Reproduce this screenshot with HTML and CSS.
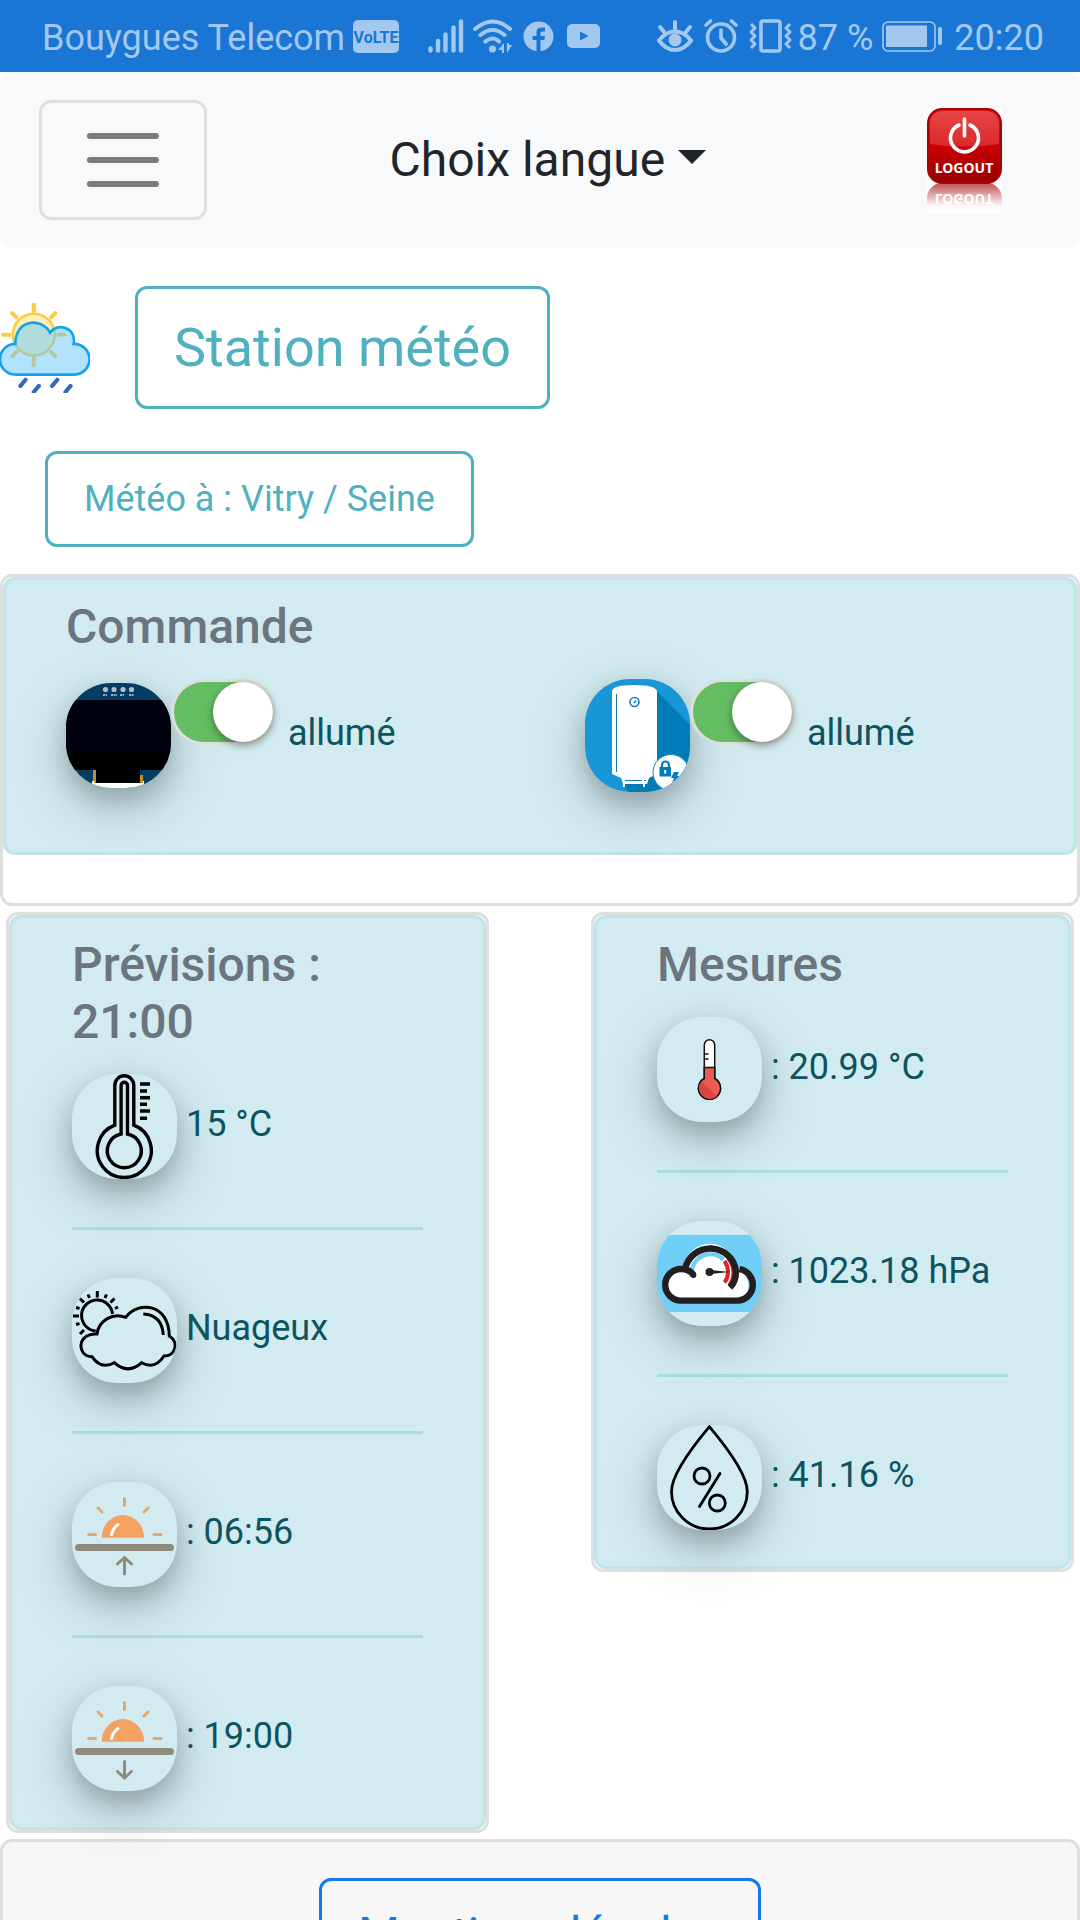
FILE: index.html
```html
<!DOCTYPE html>
<html lang="fr">
<head>
<meta charset="utf-8">
<meta name="viewport" content="width=device-width, initial-scale=1">
<title>Station météo</title>
<link rel="stylesheet" href="styles.css">
</head>
<body>
<div class="status">
  <span class="status-text">Bouygues Telecom</span>
  <svg class="volte" width="46" height="33" viewBox="0 0 46 33"><rect width="46" height="33" rx="5" fill="#a3c8ef"/><text x="23" y="23" text-anchor="middle" class="volte-text">VoLTE</text></svg>
  <svg class="signal" width="36" height="34" viewBox="0 0 36 34" stroke="#a3c8ef" stroke-width="4.4" stroke-linecap="round"><path d="M2.500 29.500v2M10 22v9.500M17.500 15.500v16M25.500 8.500v23M33 2.500v29"/></svg>
  <svg width="40" height="34" viewBox="0 0 40 34" fill="none" stroke="#a3c8ef" stroke-width="4" stroke-linecap="round"><path d="M2 10Q20-5 37 10M7.500 16Q20 6 31.500 16M12.500 22.500Q20 16.500 26 22.500"/><circle cx="19.500" cy="30" r="3.500" fill="#a3c8ef" stroke="none"/><path d="M31 24v10h-2v-3h-4zM34 24v10l5-8h-3v-2z" fill="#a3c8ef" stroke="none"/></svg>
  <svg class="fb" width="31" height="31" viewBox="0 0 31 31"><circle cx="15.500" cy="15.500" r="15" fill="#a3c8ef"/><path d="M13.500 31V19h-4v-4h4v-3.500q0-5 5-5h3.500v4h-2.500q-2 0-2 2V15h4.500l-.7 4h-3.800v12z" fill="#1a76d4"/></svg>
  <svg class="yt" width="33" height="24" viewBox="0 0 33 24"><rect width="33" height="24" rx="5" fill="#a3c8ef"/><path d="M13 7.500v9l8.500-4.500z" fill="#1a76d4"/></svg>
  <span class="status-right">
    <svg width="36" height="34" viewBox="0 0 36 34" fill="none" stroke="#a3c8ef" stroke-width="4" stroke-linecap="round"><path d="M2 21.500Q9 12.500 18 12.500t16 9Q27 31 18 31T2 21.500zM18 3v7M3 8l4 5M33 8l-4 5"/><circle cx="18" cy="21" r="6.500" fill="#a3c8ef" stroke="none"/></svg>
    <svg width="34" height="34" viewBox="0 0 34 34" fill="none" stroke="#a3c8ef" stroke-width="3.600" stroke-linecap="round"><circle cx="17" cy="18.500" r="13.500"/><path d="M2 6l4.500-4M32 6l-4.500-4M17 11v8l5 6"/></svg>
    <svg width="43" height="34" viewBox="0 0 43 34" fill="none" stroke="#a3c8ef" stroke-width="3.600" stroke-linejoin="round"><rect x="12" y="2" width="19" height="30" rx="2"/><path d="M2 5l4 4-4 4 4 4-4 4 4 4-4 4M41 5l-4 4 4 4-4 4 4 4-4 4 4 4" stroke-width="3"/></svg>
    <span class="status-text percent">87 %</span>
    <svg class="battery" width="61" height="31" viewBox="0 0 61 31" fill="#a3c8ef"><rect x="1" y="1" width="52" height="29" rx="5" fill="none" stroke="#a3c8ef" stroke-width="1.600"/><rect x="4" y="4.500" width="41" height="21.500"/><rect x="56" y="6" width="4" height="18" rx="2"/></svg>
    <span class="status-text">20:20</span>
  </span>
</div>

<div class="page">
  <nav class="navbar">
    <button class="toggler" type="button" aria-label="Menu"><svg width="90" height="90" viewBox="0 0 30 30"><path d="M4 7h22M4 15h22M4 23h22" stroke="#7c7c7c" stroke-width="2" stroke-linecap="round"/></svg></button>
    <div class="lang">
      <select class="lang-select" aria-label="Langue"><option>Choix langue</option><option>Français</option><option>English</option></select>
    </div>
    <a class="logout" href="#" aria-label="Logout"><svg width="75" height="105" viewBox="0 0 75 105">
      <defs>
        <linearGradient id="red" x1="0" y1="0" x2="0" y2="1"><stop offset="0" stop-color="#d8181c"/><stop offset=".5" stop-color="#cb0004"/><stop offset="1" stop-color="#960003"/></linearGradient>
        <linearGradient id="shine" x1="0" y1="0" x2="0" y2="1"><stop offset="0" stop-color="#e84648"/><stop offset="1" stop-color="#d9282b"/></linearGradient>
        <linearGradient id="fade" x1="0" y1="0" x2="0" y2="1"><stop offset="0" stop-color="#fff" stop-opacity=".35"/><stop offset=".75" stop-color="#fff" stop-opacity=".97"/><stop offset="1" stop-color="#fff"/></linearGradient>
      </defs>
      <rect width="75" height="105" fill="#fff"/>
      <g id="logout-key"><rect x="1" y="1" width="73" height="74" rx="14" fill="url(#red)" stroke="#a80408" stroke-width="2"/><path d="M3 36V17Q3 3 17 3h41q14 0 14 14v19q-35 5-69 0z" fill="url(#shine)"/><text x="37" y="65" text-anchor="middle" class="logout-text">LOGOUT</text></g>
      <path d="M32 17a14 14 0 1 0 11 0M37.500 11v17" fill="none" stroke="#fff" stroke-width="3.600" stroke-linecap="round"/>
      <use href="#logout-key" transform="translate(0 151) scale(1 -1)"/>
      <rect y="76" width="75" height="29" fill="url(#fade)"/>
    </svg></a>
  </nav>

  <header class="title-row">
    <svg width="90" height="90" viewBox="1 1 88 88" fill="none" stroke-linecap="round">
      <circle cx="34" cy="32" r="20.500" fill="#ffefb8" stroke="#ffcb3e" stroke-width="2.600"/>
      <path d="M34 2v7M34 55v7M4 32h6M58 32h6M13 11l4 4M55 11l-4 4M13 53l4-4M55 53l-4-4" stroke="#ffcb3e" stroke-width="4"/>
      <path d="M16 71A15 15 0 0 1 16 41C16 16 42 15 50 30C56 20 76 24 73 41A15 15 0 0 1 74 71z" fill="#63c8ff" fill-opacity=".5" stroke="#12a3ee" stroke-width="2.600"/>
      <path d="M26 76l-5 6M39 82l-5 6M57 76l-5 6M70 82l-5 6" stroke="#2e6bbd" stroke-width="4"/>
    </svg>
    <button class="btn btn-title" type="button">Station météo</button>
  </header>
  <button class="btn btn-city" type="button">Météo à : Vitry / Seine</button>

  <section class="card card-command">
    <div class="panel panel-command">
      <h2 class="heading">Commande</h2>
      <div class="commands">
        <div>
          <svg class="icon" width="105" height="105" viewBox="0 0 105 105"><rect width="105" height="105" fill="#023e64"/><rect y="17" width="105" height="70"/><rect x="1" y="18" width="103" height="52" fill="#00010f"/><path d="M29 86h45v15H29z"/><path d="M27 87h3v13h-3zM74 92h3v8h-3z" fill="#c29122"/><path d="M26 98v7h52v-7h-1v2H28v-2z" fill="#fff"/><g fill="#b9bec6"><circle cx="39.500" cy="6.500" r="2.600"/><circle cx="48" cy="6.500" r="2.600"/><circle cx="57" cy="6.500" r="2.600"/><circle cx="65.500" cy="6.500" r="2.600"/></g><path d="M37 12h4M45 12h6M54 12h4M63 12h5" stroke="#c8d4de" stroke-width="1.600" stroke-dasharray="2 .6"/></svg><input class="switch" type="checkbox" id="screen" checked> <label for="screen">allumé</label>
        </div>
        <div>
          <svg class="icon" width="105" height="113" viewBox="0 0 105 113"><rect width="105" height="113" fill="#1896d6"/><path d="M72 12l33 34v67H43l-7-12z" fill="#007cb9"/><path d="M27 12q1-6 22-6t23 6v83l-8 4-2 6h-2v3h-2v-3H40v3h-2v-3l-2-6-9-4z" fill="#fff"/><path d="M31.500 15v78M40 101.500h17M59 101.500h2" stroke="#1a77a8" stroke-width="1" fill="none"/><circle cx="49.500" cy="23" r="4.500" fill="none" stroke="#0d85c4" stroke-width="1.600"/><path d="M49 24l2-2.500" stroke="#0d85c4" stroke-width="1.500"/><circle cx="86" cy="93.500" r="18" fill="#fff" stroke="#0d85c4" stroke-width="1"/><path d="M77 89v-3a3.500 3.500 0 0 1 7 0v3" stroke="#007cb9" stroke-width="2.200" fill="none"/><path d="M74.500 88h11.500v9.500H74.500z" fill="#007cb9"/><path d="M80.200 91v3.500" stroke="#fff" stroke-width="2"/><path d="M89 93h5l-2 4h3l-8 7 2-5h-3z" fill="#007cb9"/></svg><input class="switch" type="checkbox" id="boiler" checked> <label for="boiler">allumé</label>
        </div>
      </div>
    </div>
  </section>

  <div class="columns">
    <section class="card">
      <div class="panel">
        <h2 class="heading">Prévisions : 21:00</h2>
        <div><svg class="icon" width="105" height="105" viewBox="0 0 105 105" fill="none" stroke="#000" stroke-width="3.400"><path d="M42.800 51.200V11.300a9.500 9.500 0 0 1 19 0v39.900a27 27 0 1 1-19 0z"/><path d="M49.100 60V11.500a3.200 3.200 0 0 1 6.400 0V60a17 17 0 1 1-6.400 0z"/><path d="M68 10h10M68 17h7M68 23.700h10M68 30.300h7M68 37h10M68 44.300h7"/></svg> 15 °C</div>
        <hr class="rule">
        <div><svg class="icon" width="105" height="105" viewBox="0 0 105 105" fill="none" stroke="#000" stroke-width="3"><path d="M23.700 53A15.500 15.500 0 1 1 40.500 36"/><path d="M25.300 13v6.500M1 38h6M8 20.500l4 4M42.500 20.500l-4 4M8 56l4-4M16 16.500l1.500 3.500M34.500 16.500L33 20M4 29.500l3.500 1M4 46.500l3.500-1M46 29l-3 1.500"/><path d="M25 56A21 21 0 0 1 53.700 39.300C67 22 97 26 97.300 58C107 64 104 78 92 78Q83 92 69.700 84.700Q56 97 42.300 84.700Q29 92 20 78.700C5 79 4 55 25 56z"/><path d="M71.300 36Q90 37 91.300 57"/></svg> Nuageux</div>
        <hr class="rule">
        <div><svg class="icon" width="105" height="105" viewBox="0 0 105 105" fill="none" stroke-linecap="round"><path d="M52.500 16.500v7M26 26l4 4M76 26l-4 4M16.500 52.500h7M82 52.500h7" stroke="#e6a66f" stroke-width="3"/><path d="M29.700 55.700a21.200 22.700 0 0 1 42.400 0z" fill="#f3a261"/><path d="M39.500 52.500Q41 46 46 42.500" stroke="#fff" stroke-width="3"/><path d="M6.500 65.500h92" stroke="#8f8b7c" stroke-width="7"/><path d="M52.500 92V76M45.500 82l7-6.500 7 6.500" stroke="#8f8b7c" stroke-width="3"/></svg> : 06:56</div>
        <hr class="rule">
        <div><svg class="icon" width="105" height="105" viewBox="0 0 105 105" fill="none" stroke-linecap="round"><path d="M52.500 16.500v7M26 26l4 4M76 26l-4 4M16.500 52.500h7M82 52.500h7" stroke="#e6a66f" stroke-width="3"/><path d="M29.700 55.700a21.200 22.700 0 0 1 42.400 0z" fill="#f3a261"/><path d="M39.500 52.500Q41 46 46 42.500" stroke="#fff" stroke-width="3"/><path d="M6.500 65.500h92" stroke="#8f8b7c" stroke-width="7"/><path d="M52.500 75.500V91M45.500 85.500l7 6.500 7-6.500" stroke="#8f8b7c" stroke-width="3"/></svg> : 19:00</div>
      </div>
    </section>

    <section class="card">
      <div class="panel">
        <h2 class="heading">Mesures</h2>
        <div><svg class="icon" width="105" height="105" viewBox="0 0 105 105" stroke="#111" stroke-width="1.500"><path d="M47.300 61.500V28a5.200 5.200 0 0 1 10.400 0v33.500a11 11 0 1 1-10.400 0z" fill="#fff"/><path d="M47.300 61.500V50.500h10.400v11a11 11 0 1 1-10.400 0z" fill="#ee5a56"/><path d="M44.500 64L60 79.500a11 11 0 0 1-15.500-15.500z" fill="#d94545" stroke="none"/><path d="M47 37h4.500M47 42h4.500"/></svg> : 20.99 °C</div>
        <hr class="rule">
        <div><svg class="icon" width="105" height="105" viewBox="0 0 105 105" fill="none"><path d="M0 14h105v77H0z" fill="#6fcff6"/><path d="M24 79.600a15.800 15.800 0 0 1 3-31.400a26 26 0 0 1 52 1a15.800 15.800 0 0 1 2 30.400z" fill="#fff"/><path d="M34.500 51A19 19 0 0 1 66.500 38.500" stroke="#6fcff6" stroke-width="4.500"/><path d="M67.500 40a18 18 0 0 1 0 21.500" stroke="#e3202b" stroke-width="4"/><path d="M71 37.500a22 22 0 0 1 1 27" stroke="#e3202b" stroke-width="3.400"/><path d="M36.500 54q-4-6-12.500-6a15.800 15.800 0 0 0 0 31.600h56.500a15.800 15.800 0 0 0 2-31.400M28 48.500a25.800 25.800 0 0 1 51 2q0 10-6 16" stroke="#231f20" stroke-width="6.400"/><circle cx="36.400" cy="54" r="3" fill="#231f20"/><circle cx="52.500" cy="51" r="4" fill="#231f20"/><path d="M53 49l20 2-20 2z" fill="#231f20"/></svg> : 1023.18 hPa</div>
        <hr class="rule">
        <div><svg class="icon" width="105" height="105" viewBox="0 0 105 105" fill="none" stroke="#000" stroke-width="2.800" stroke-linecap="round"><path d="M52.400 1.700Q14.500 47 14.500 66.500a37.900 37.500 0 0 0 75.800 0Q90.300 47 52.400 1.700z"/><circle cx="45" cy="51" r="8"/><circle cx="60.300" cy="78" r="8"/><path d="M63 48.500L42.500 81.500"/></svg> : 41.16 %</div>
      </div>
    </section>
  </div>

  <footer class="footer"><a class="btn btn-legal" href="#">Mentions légales</a></footer>
</div>
</body>
</html>
```
FILE: styles.css
```css
*, *::before, *::after { box-sizing: border-box; }

body {
  margin: 0;
  height: 100vh;
  display: flex;
  flex-direction: column;
  overflow: hidden;
  background: #fff;
  color: #212529;
  font: 400 36px/54px Roboto, "Noto Sans", sans-serif;
}

svg { flex: none; }

/* Phone status bar */
.status {
  flex: none;
  height: 72px;
  padding: 0 36px 0 42px;
  display: flex;
  align-items: center;
  background: #1a76d4;
  color: #a3c8ef;
}
.status-text { padding-top: 3px; font-size: 36px; line-height: 42px; white-space: nowrap; }
.volte { margin-left: 8px; }
.volte-text { font: 700 16px Roboto, sans-serif; fill: #1a76d4; }
.signal { margin: 0 9px 0 29px; }
.fb { margin-left: 10px; }
.yt { margin-left: 13px; }
.status-right { margin-left: auto; display: flex; align-items: center; gap: 11px; }
.percent { margin: 0 -2px 0 -5px; }

/* Scrolling page below it */
.page { flex: 1; min-height: 0; overflow-y: auto; scrollbar-width: none; }

.navbar {
  display: grid;
  grid-template-columns: 1fr auto 1fr;
  align-items: center;
  padding: 28px 24px 28px 39px;
  border-radius: 12px;
  background: #f8f9fb;
}
.toggler {
  justify-self: start;
  display: flex;
  padding: 12px 36px;
  border: 3px solid #dedfe1;
  border-radius: 12px;
  background: transparent;
}
.lang { display: flex; align-items: center; }
.lang::after {
  content: "";
  margin: -6px 0 0 12px;
  border: 14px solid transparent;
  border-top-color: #212529;
  border-bottom: 0;
}
.lang-select {
  appearance: none;
  padding: 0;
  border: 0;
  background: transparent;
  color: #212529;
  font: 400 48px/72px Roboto, "Noto Sans", sans-serif;
}
.logout { justify-self: end; display: flex; margin-right: 54px; }
.logout-text { font: 700 14px "Noto Sans", sans-serif; fill: #fff; }

/* Outlined buttons */
.btn {
  display: inline-block;
  padding: 18px 36px;
  border: 3px solid #4fb0c0;
  border-radius: 12px;
  background: transparent;
  color: #4fb0c0;
  font: 400 36px/54px Roboto, "Noto Sans", sans-serif;
  text-decoration: none;
}
.title-row { display: flex; align-items: center; gap: 45px; margin-top: 38px; }
.btn-title { font-size: 54px; line-height: 81px; }
.btn-city { display: block; margin: 42px 0 27px 45px; }
.btn-legal { border-color: #1279ea; color: #1279ea; font-size: 48px; line-height: 72px; }

/* Cards */
.card { border: 3px solid #dfdfdf; border-radius: 12px; }
.panel {
  padding: 18px 60px 36px;
  border: 3px solid #bfe4ea;
  border-radius: 12px;
  background: #d1ebf0;
  color: #0c5460;
}
.card-command { padding-bottom: 48px; }
.panel-command { padding-bottom: 60px; }
.heading {
  margin: 0 0 24px;
  color: #6c757d;
  font-size: 48px;
  font-weight: 500;
  line-height: 57px;
}
.commands { display: grid; grid-template-columns: 1fr 1fr; gap: 90px; }
.columns {
  display: grid;
  grid-template-columns: 1fr 1fr;
  align-items: start;
  gap: 102px;
  padding: 6px;
}
.icon {
  vertical-align: middle;
  border-radius: 45px;
  box-shadow: 0 12px 24px rgba(0, 0, 0, .2), 0 18px 60px rgba(0, 0, 0, .19);
}
.rule { margin: 48px 0; border: 0; border-top: 3px solid #abdde5; }

.switch {
  appearance: none;
  width: 105px;
  height: 66px;
  margin: 0 3px 0 0;
  border: 3px solid #dcdfdc;
  border-radius: 33px;
  background: #64bd63;
  vertical-align: baseline;
}
.switch::before {
  content: "";
  display: block;
  width: 60px;
  height: 60px;
  margin-left: auto;
  border-radius: 50%;
  background: #fff;
  box-shadow: 0 3px 9px rgba(0, 0, 0, .4);
}

.footer {
  padding: 36px;
  border: 3px solid #dfdfdf;
  border-radius: 12px;
  background: #f7f7f7;
  text-align: center;
}
```
